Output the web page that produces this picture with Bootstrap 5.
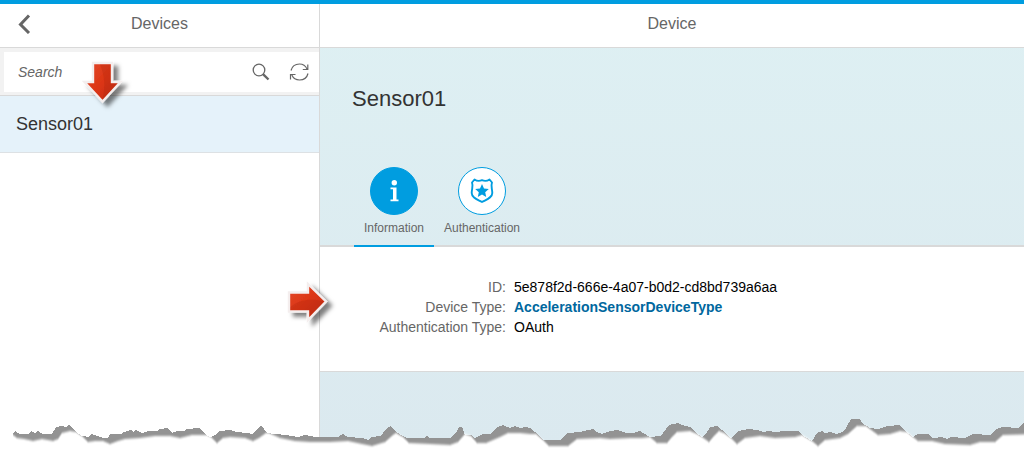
<!DOCTYPE html>
<html lang="en">
<head>
<meta charset="utf-8">
<meta name="viewport" content="width=device-width, initial-scale=1">
<title>Devices</title>
<link href="https://cdn.jsdelivr.net/npm/bootstrap@5.3.0/dist/css/bootstrap.min.css" rel="stylesheet">
<style>
  :root { --accent: #009de0; --line: #d9d9d9; --muted: #666; }
  body { font-family: "Liberation Sans", Arial, sans-serif; font-size: 14px; line-height: 20px; color: #333; background: #fff; }
  .shell { border-top: 4px solid var(--accent); }
  .master { width: 320px; border-right: 1px solid var(--line); }
  .page-bar { height: 44px; border-bottom: 1px solid var(--line); }
  .page-title { font-size: 16px; line-height: 20px; color: var(--muted); padding-bottom: 4px; }
  .back-btn { left: 16px; top: 10px; }
  .search-bar { background: #f2f2f2; border-bottom: 1px solid var(--line); padding: 4px 0 3px 4px; }
  .search-box { height: 40px; padding-right: 9px; }
  .search-box input { font-size: 14px; font-style: italic; padding: 0 0 0 14px; color: var(--muted); }
  .search-box input::placeholder { color: var(--muted); opacity: 1; }
  .device-item { height: 57px; font-size: 18px; color: #333; background: #e5f2fa; border-bottom: 1px solid #dde1e4; padding: 0 16px; }
  .detail { background: linear-gradient(#def0f3, #dbe9ef); }
  .object-title { font-size: 22px; line-height: 28px; padding: 37px 32px 0; height: 119px; }
  .tab-strip { height: 80px; border-bottom: 2px solid var(--line); padding-left: 34px; }
  .tab-btn { width: 80px; height: 80px; font-size: 12px; line-height: 16px; color: var(--muted); border-bottom: 2px solid transparent; }
  .tab-btn.selected { border-bottom-color: var(--accent); }
  .tab-icon { width: 48px; height: 48px; border: 1px solid var(--accent); background: #fff; margin-bottom: 5px; }
  .selected .tab-icon { background: var(--accent); }
  .facts { border-bottom: 1px solid var(--line); padding: 30px 0 34px; }
  .facts dt { width: 186px; color: var(--muted); }
  .facts dd { color: #000; }
  .facts a { color: #00679e; }
  .pointer-down { left: 78px; top: 56px; }
  .pointer-right { left: -36px; top: 270px; }
  .torn { left: 0; bottom: 0; height: 36px; }
</style>
</head>
<body>
<div class="shell d-flex min-vh-100 position-relative overflow-hidden">
  <aside class="master flex-shrink-0 position-relative">
    <header class="page-bar d-flex align-items-center justify-content-center position-relative">
      <button type="button" class="back-btn btn p-0 border-0 position-absolute d-flex" aria-label="Back">
        <svg width="16" height="20" viewBox="0 0 16 20" fill="none" stroke="#666" stroke-width="3"><path d="M13 1.500 4.500 10.500 13 19"/></svg>
      </button>
      <h1 class="page-title m-0 fw-normal">Devices</h1>
    </header>
    <div class="search-bar">
      <form class="search-box d-flex align-items-center bg-white" role="search">
        <input class="form-control border-0 shadow-none bg-transparent h-100" type="text" placeholder="Search" aria-label="Search">
        <button type="button" class="btn p-0 border-0 d-flex flex-shrink-0 me-3" aria-label="Find">
          <svg width="22" height="20" viewBox="0 0 22 20" fill="none" stroke="#666"><circle cx="9" cy="8" r="5.800" stroke-width="1.300"/><path d="M13 12.200 18.500 17.500" stroke-width="2.400"/></svg>
        </button>
        <button type="button" class="btn p-0 border-0 d-flex flex-shrink-0" aria-label="Refresh">
          <svg width="22" height="20" viewBox="0 0 22 20" fill="none" stroke="#666" stroke-width="1.200"><path d="M3 8.500C4 4.500 7.500 2 11.500 2c3.500 0 6 1.700 7.500 5M19.800 2.500v5h-5M20 11.500c-1 4-4.500 6.500-8.500 6.500-3.500 0-6.300-1.900-7.700-5M2.500 17.500v-5h5"/></svg>
        </button>
      </form>
    </div>
    <nav class="d-flex flex-column">
      <a href="#" class="device-item d-flex align-items-center text-decoration-none">Sensor01</a>
    </nav>
    <svg class="pointer-down position-absolute pe-none" width="56" height="56" viewBox="0 0 56 56" aria-hidden="true">
      <defs>
        <linearGradient id="red" x1="0" y1="0" x2="1" y2="1"><stop offset="0" stop-color="#e3492a"/><stop offset=".5" stop-color="#dc3515"/><stop offset="1" stop-color="#bd2c10"/></linearGradient>
        <filter id="shade" x="-30%" y="-30%" width="180%" height="180%"><feDropShadow dx="5" dy="4" stdDeviation="2.200" flood-color="#000" flood-opacity=".5"/></filter>
      </defs>
      <path d="M15 3H34V22H42.500L24.500 41.500 6.500 22H15Z" fill="url(#red)" stroke="#f4eeee" stroke-width="2.400" filter="url(#shade)"/>
      <path d="M22 4.500C26 14 28 25 24.500 39.500L39 23.500H32.500V4.500Z" fill="#9f2209" opacity=".22"/>
    </svg>
  </aside>

  <main class="detail flex-grow-1 position-relative">
    <header class="page-bar bg-white d-flex align-items-center justify-content-center">
      <h2 class="page-title m-0 fw-normal">Device</h2>
    </header>
    <h3 class="object-title m-0 fw-normal">Sensor01</h3>
    <div class="tab-strip d-flex gap-2" role="tablist">
      <button type="button" role="tab" aria-selected="true" class="tab-btn selected btn rounded-0 p-0 border-top-0 border-start-0 border-end-0 d-flex flex-column align-items-center">
        <span class="tab-icon rounded-circle d-flex align-items-center justify-content-center">
          <svg width="24" height="24" viewBox="0 0 24 24" fill="#fff"><circle cx="12.300" cy="3.700" r="2.700"/><path d="M8.500 8.500h6V20.500H16.500v1.700h-8v-1.700H11v-10.300H8.500Z"/></svg>
        </span>
        Information
      </button>
      <button type="button" role="tab" aria-selected="false" class="tab-btn btn rounded-0 p-0 border-top-0 border-start-0 border-end-0 d-flex flex-column align-items-center">
        <span class="tab-icon rounded-circle d-flex align-items-center justify-content-center">
          <svg width="24" height="26" viewBox="0 0 24 26"><path d="M4.500 1.500C7 3.200 9.500 3.200 12 2.200 14.500 3.200 17 3.200 19.500 1.500L22 4.500C20.500 8 22.300 11 22.300 15 22.200 20 16.500 21.500 12 24 7.500 21.500 1.800 20 1.700 15 1.700 11 3.500 8 2 4.500Z" fill="none" stroke="#009de0" stroke-width="1.900" stroke-linejoin="round"/><path d="M12 6 14 10.500 18.800 11 15.200 14.300 16.200 19 12 16.600 7.800 19 8.800 14.300 5.200 11 10 10.500Z" fill="#009de0"/></svg>
        </span>
        Authentication
      </button>
    </div>
    <dl class="facts bg-white m-0">
      <div class="d-flex gap-2"><dt class="fw-normal text-end flex-shrink-0">ID:</dt><dd class="m-0">5e878f2d-666e-4a07-b0d2-cd8bd739a6aa</dd></div>
      <div class="d-flex gap-2"><dt class="fw-normal text-end flex-shrink-0">Device Type:</dt><dd class="m-0"><a href="#" class="fw-bold text-decoration-none">AccelerationSensorDeviceType</a></dd></div>
      <div class="d-flex gap-2"><dt class="fw-normal text-end flex-shrink-0">Authentication Type:</dt><dd class="m-0">OAuth</dd></div>
    </dl>
    <svg class="pointer-right position-absolute pe-none" width="60" height="60" viewBox="0 0 60 60" aria-hidden="true">
      <path d="M5 18.500H24V10L42 27.500 24 46V37.500H5Z" fill="url(#red)" stroke="#f4eeee" stroke-width="2.400" filter="url(#shade)"/>
      <path d="M6.500 33C15 26 26 24 40 27.500L25.500 42.500V36H6.500Z" fill="#9f2209" opacity=".22"/>
    </svg>
  </main>

  <svg class="torn position-absolute w-100 pe-none" viewBox="0 414 1024 36" preserveAspectRatio="none" aria-hidden="true">
    <defs><filter id="soft" x="-1%" y="-10%" width="102%" height="130%"><feGaussianBlur stdDeviation="0.6 1.300"/></filter></defs>
    <path shape-rendering="crispEdges" fill="#939393" d="M13 434 15 431 20 434 28 434 31 431 35 433 38 431 43 434 52 434 56 427 62 426 66 427 68 425 71 426 76 432 82 436 89 437 91 434 97 436 104 438 108 438 110 434 121 434 124 432 131 430 133 432 136 430 142 433 148 431 157 431 160 429 168 428 172 433 177 431 184 431 186 429 200 428 207 436 211 437 215 435 220 431 230 430 237 432 246 433 253 434 258 428 261 425 267 433 275 434 286 435 298 437 305 435 316 437 325 437 338 437 343 434 348 437 362 438 368 440 371 437 381 436 386 429 391 426 396 432 403 436 407 438 424 438 427 436 430 438 450 438 456 433 459 427 462 427 465 435 471 435 475 438 483 434 490 434 496 428 503 425 507 427 510 428 515 426 520 428 525 427 530 428 535 432 543 440 560 440 567 433 580 432 584 431 593 429 596 432 602 434 610 431 618 430 626 433 633 433 640 431 645 434 650 437 660 436 663 433 669 425 678 423 685 426 690 427 695 432 702 437 706 434 710 427 717 426 722 430 731 438 738 431 748 429 757 430 763 432 768 431 776 432 784 431 798 431 802 435 812 441 817 433 822 431 825 433 830 432 836 434 842 432 846 428 851 419 860 419 862 423 870 428 878 429 888 426 899 425 905 431 913 437 918 434 928 434 933 438 942 437 947 439 951 437 965 438 973 434 990 435 996 429 1003 427 1018 428 1024 422V450H13Z"/>
    <path fill="#fff" filter="url(#soft)" d="M-9 436 13 435 17 438 24 439 33 441 42 439 53 441 58 439 62 433 70 431 76 432 82 436 88 442 95 441 103 441 110 444 118 441 125 439 140 438 155 436 170 436 180 438 192 435 207 435 211 437 217 443 223 438 230 437 245 438 253 441 259 438 266 433 269 433 280 438 295 441 310 442 330 442 348 441 362 444 372 446 385 442 393 435 396 433 403 437 409 443 430 444 450 445 458 442 465 434 471 436 477 443 486 443 493 440 500 437 508 433 520 433 530 434 536 434 543 440 549 446 568 446 577 439 600 438 610 439 630 438 642 438 650 437 657 443 667 443 672 437 677 432 690 431 697 434 702 437 709 442 714 436 719 431 724 433 731 438 737 444 745 438 760 436 775 438 795 437 802 435 812 441 818 446 825 440 840 438 848 434 857 426 866 426 878 435 890 434 900 431 907 432 913 437 918 441 932 441 945 444 970 445 980 442 995 442 1003 435 1034 434V456H-9Z"/>
  </svg>
</div>
<script src="https://cdn.jsdelivr.net/npm/bootstrap@5.3.0/dist/js/bootstrap.bundle.min.js"></script>
</body>
</html>
